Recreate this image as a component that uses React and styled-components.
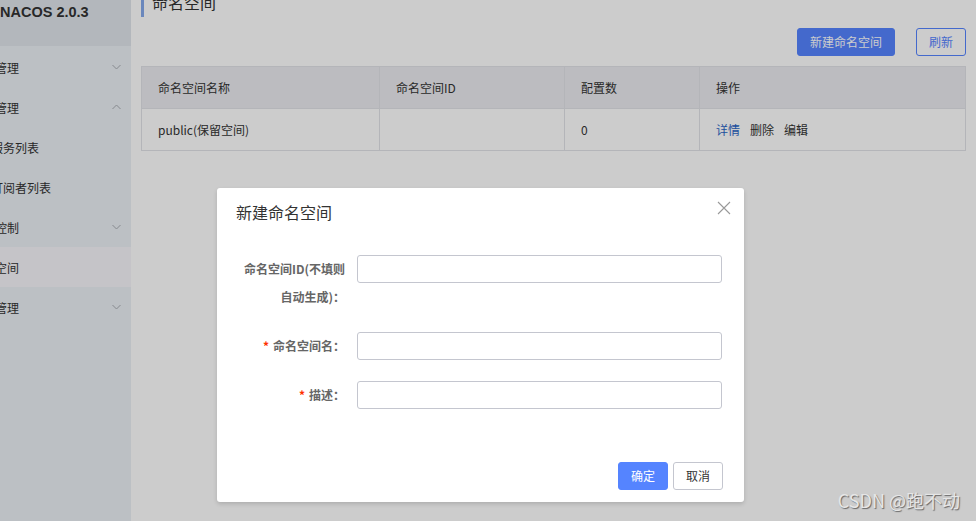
import React from 'react';
import styled, { createGlobalStyle } from 'styled-components';

const GlobalStyle = createGlobalStyle`
  body {
    margin: 0;
    font-family: "Noto Sans CJK SC", "Noto Sans", sans-serif;
    font-size: 12px;
    color: #333;
  }
`;

const Page = styled.div`
  position: relative;
  display: flex;
  width: 976px;
  height: 521px;
  overflow: hidden;
  background: #fff;
`;

const Sidebar = styled.aside`
  display: flex;
  flex-direction: column;
  width: 131px;
  flex-shrink: 0;
  background: #ebf0f5;
  overflow: hidden;
`;

const Brand = styled.div`
  height: 46px;
  background: #e0e5eb;
  padding-top: 4px;
  box-sizing: border-box;
  font-family: "Liberation Sans", Arial, sans-serif;
  font-weight: 700;
  font-size: 14.5px;
  line-height: 16px;
  color: #333;
  white-space: nowrap;
`;

const Menu = styled.ul`
  list-style: none;
  margin: 1px 0 0 -29px;
  padding: 0;
`;

const MenuItem = styled.li`
  display: flex;
  align-items: center;
  justify-content: space-between;
  height: 40px;
  padding: 0 10px 0 ${({ $sub }) => ($sub ? '20px' : '0')};
  background: ${({ $active }) => ($active ? '#f7f6fb' : 'transparent')};
  font-size: 12px;
  color: #333;
  white-space: nowrap;
`;

const Chevron = ({ up }) => (
  <svg width="9" height="6" viewBox="0 0 9 6">
    <polyline
      points={up ? '0.5,5 4.5,1 8.5,5' : '0.5,1 4.5,5 8.5,1'}
      fill="none"
      stroke="#a9adb3"
      strokeWidth="1"
    />
  </svg>
);

const Main = styled.main`
  flex: 1;
  display: flex;
  flex-direction: column;
  padding: 0 11px 0 10px;
`;

const Title = styled.h1`
  margin: -8px 0 0;
  padding: 0 0 4px 8px;
  border-left: 3px solid #85a9ec;
  font-size: 16px;
  font-weight: 400;
  line-height: 21px;
  color: #333;
`;

const Toolbar = styled.div`
  display: flex;
  justify-content: flex-end;
  gap: 21px;
  margin-top: 11px;
`;

const Button = styled.button`
  height: 28px;
  padding: 0 ${({ $pad }) => $pad || 12}px;
  border-radius: 3px;
  font-family: inherit;
  font-size: 12px;
  line-height: 26px;
  cursor: pointer;
  border: 1px solid ${({ $variant }) => ($variant === 'primary' || $variant === 'outline' ? '#5584ff' : '#c4c6cf')};
  background: ${({ $variant }) => ($variant === 'primary' ? '#5584ff' : '#fff')};
  color: ${({ $variant }) => ($variant === 'primary' ? '#fff' : $variant === 'outline' ? '#5584ff' : '#333')};
`;

const Table = styled.table`
  margin-top: 10px;
  width: 825px;
  border-collapse: collapse;
  table-layout: fixed;
  font-size: 12px;
  color: #333;
`;

const Th = styled.th`
  height: 41px;
  padding: 0 16px;
  background: #ebecf0;
  border: 1px solid #e2e3e8;
  font-weight: 400;
  text-align: left;
`;

const Td = styled.td`
  height: 41px;
  padding: 0 16px;
  border: 1px solid #e2e3e8;
  text-align: left;
`;

const Link = styled.a`
  margin-right: 10px;
  color: ${({ $blue }) => ($blue ? '#2a64c6' : '#333')};
  text-decoration: none;
`;

const Mask = styled.div`
  position: absolute;
  inset: 0;
  display: flex;
  align-items: flex-start;
  padding: 188px 0 0 217px;
  background: rgba(0, 0, 0, 0.2);
`;

const Dialog = styled.div`
  width: 527px;
  background: #fff;
  border-radius: 3px;
  box-shadow: 0 2px 4px rgba(0, 0, 0, 0.15);
`;

const DialogHeader = styled.div`
  display: flex;
  justify-content: space-between;
  align-items: flex-start;
  height: 48px;
  box-sizing: border-box;
  padding: 12px 13px 0 19px;
  font-size: 16px;
  line-height: 24px;
  color: #333;
`;

const CloseIcon = () => (
  <svg width="14" height="14" viewBox="0 0 14 14" style={{ marginTop: 1 }}>
    <path d="M1 1 L13 13 M13 1 L1 13" stroke="#999" strokeWidth="1.1" fill="none" />
  </svg>
);

const DialogBody = styled.div`
  padding: 19px 22px 40px 20px;
`;

const FormItem = styled.div`
  display: flex;
  align-items: flex-start;
  &:not(:last-child) {
    margin-bottom: 21px;
  }
`;

const Label = styled.label`
  width: 120px;
  flex-shrink: 0;
  box-sizing: border-box;
  padding: 0 12px 0 3px;
  text-align: right;
  font-size: 12px;
  font-weight: 700;
  line-height: 28px;
  color: #666;
`;

const Required = styled.span`
  color: #ff3000;
  margin-right: 4px;
`;

const Input = styled.input`
  flex: 1;
  height: 28px;
  box-sizing: border-box;
  border: 1px solid #c4c6cf;
  border-radius: 3px;
  padding: 0 8px;
  outline: none;
`;

const DialogFooter = styled.div`
  display: flex;
  justify-content: flex-end;
  gap: 5px;
  padding: 13px 21px 12px;
`;

const Watermark = styled.div`
  position: absolute;
  right: 16px;
  bottom: 10px;
  font-family: "Noto Sans CJK SC", sans-serif;
  font-size: 18px;
  line-height: 22px;
  color: #e6e6e6;
  text-shadow: 1px 1px 1px rgba(0, 0, 0, 0.5);
`;

const menu = [
  { label: '配置管理', chevron: 'down' },
  { label: '服务管理', chevron: 'up' },
  { label: '服务列表', sub: true },
  { label: '订阅者列表', sub: true },
  { label: '权限控制', chevron: 'down' },
  { label: '命名空间', active: true },
  { label: '集群管理', chevron: 'down' },
];

const fields = [
  { label: '命名空间ID(不填则自动生成)：' },
  { label: '命名空间名：', required: true },
  { label: '描述：', required: true },
];

const App = () => (
  <Page>
    <GlobalStyle />
    <Sidebar>
      <Brand>NACOS 2.0.3</Brand>
      <Menu>
        {menu.map(item => (
          <MenuItem key={item.label} $sub={item.sub} $active={item.active}>
            <span>{item.label}</span>
            {item.chevron && <Chevron up={item.chevron === 'up'} />}
          </MenuItem>
        ))}
      </Menu>
    </Sidebar>

    <Main>
      <Title>命名空间</Title>
      <Toolbar>
        <Button $variant="primary" $pad={12}>新建命名空间</Button>
        <Button $variant="outline" $pad={12}>刷新</Button>
      </Toolbar>
      <Table>
        <colgroup>
          <col style={{ width: 238 }} />
          <col style={{ width: 185 }} />
          <col style={{ width: 135 }} />
          <col />
        </colgroup>
        <thead>
          <tr>
            <Th>命名空间名称</Th>
            <Th>命名空间ID</Th>
            <Th>配置数</Th>
            <Th>操作</Th>
          </tr>
        </thead>
        <tbody>
          <tr>
            <Td>public(保留空间)</Td>
            <Td></Td>
            <Td>0</Td>
            <Td>
              <Link $blue>详情</Link>
              <Link>删除</Link>
              <Link>编辑</Link>
            </Td>
          </tr>
        </tbody>
      </Table>
    </Main>

    <Mask>
      <Dialog>
        <DialogHeader>
          <span>新建命名空间</span>
          <CloseIcon />
        </DialogHeader>
        <DialogBody>
          {fields.map(field => (
            <FormItem key={field.label}>
              <Label>
                {field.required && <Required>*</Required>}
                {field.label}
              </Label>
              <Input />
            </FormItem>
          ))}
        </DialogBody>
        <DialogFooter>
          <Button $variant="primary" $pad={12}>确定</Button>
          <Button $pad={12}>取消</Button>
        </DialogFooter>
      </Dialog>
    </Mask>

    <Watermark>CSDN @跑不动</Watermark>
  </Page>
);

export default App;
